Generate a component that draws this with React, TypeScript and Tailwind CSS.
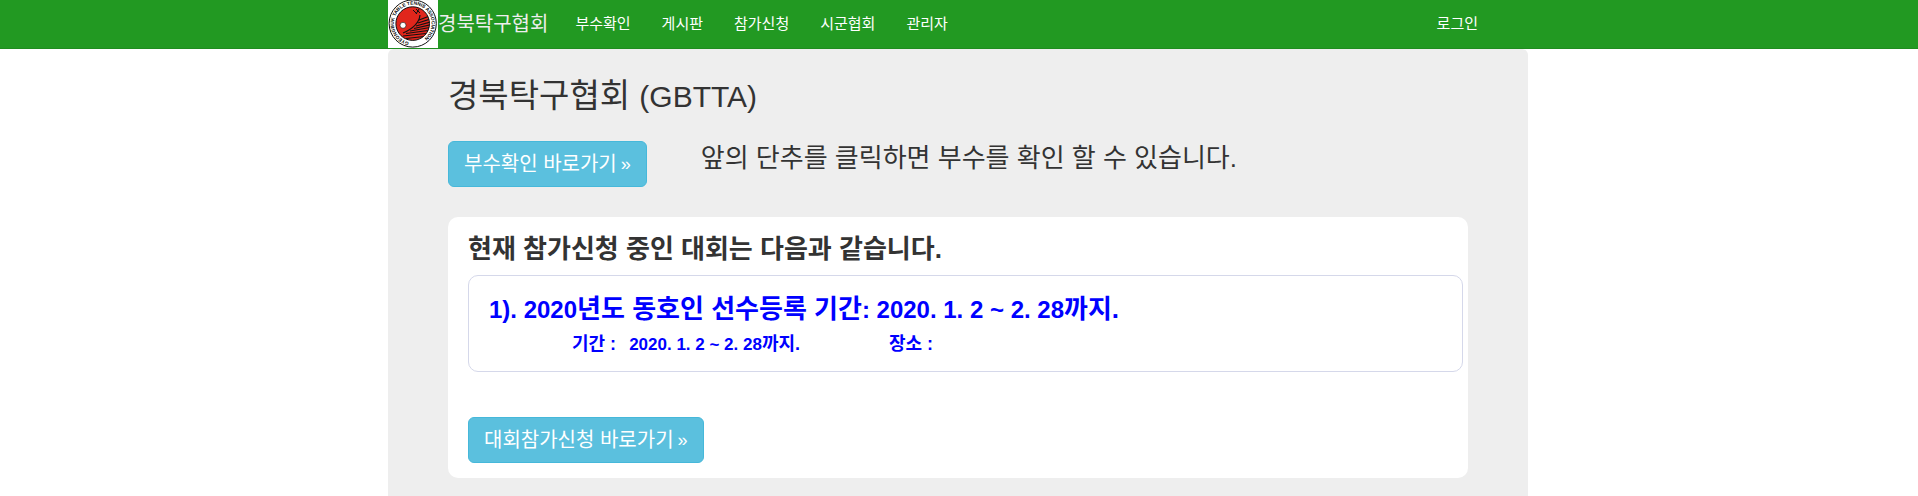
import type { ReactNode } from "react";

const navLinks = ["부수확인", "게시판", "참가신청", "시군협회", "관리자"];

function Logo() {
  return (
    <svg viewBox="0 0 50 48" className="h-12 w-[50px] shrink-0" role="img" aria-label="GBTTA">
      <defs>
        <path id="ring-text" d="M 21 42.100 A 18.900 18.900 0 1 1 28.500 42.100" />
        <clipPath id="ball">
          <circle cx="24.7" cy="23.6" r="16.8" />
        </clipPath>
      </defs>
      <rect width="50" height="48" fill="#fff" />
      <circle cx="24.7" cy="23.5" r="23.6" fill="#fff" stroke="#111" strokeWidth="1" />
      <circle cx="24.7" cy="23.6" r="16.8" fill="#e1261c" stroke="#111" strokeWidth="1" />
      <g clipPath="url(#ball)" fill="none" stroke="#111">
        <path d="M25 10 l4 4 M28 9 l4 4 M31 9 l-3 5" strokeWidth="1" />
        <path d="M32 15 Q31 26 15 33 M31 20 L44 15 M30 23 L44 18.500 M28 26 L44 21.500 M26 28.500 L44 24.500 M22 31 L42 27.500 M18 33.500 L40 30.500 M15 36 L38 33.500 M18 38.500 L36 36.500" strokeWidth="1.200" />
      </g>
      <circle cx="15" cy="25.300" r="3" fill="#fff" stroke="#111" strokeWidth="0.600" />
      <text fontSize="4.800" fontWeight="700" fill="#000" className="font-['Liberation_Sans',sans-serif]">
        <textPath href="#ring-text">GYEONGBUK TABLE TENNIS ASSOCIATION</textPath>
      </text>
    </svg>
  );
}

function ActionLink({ children }: { children: ReactNode }) {
  return (
    <a
      href="#"
      className="inline-flex h-[46px] items-center gap-1 rounded-md border border-[#46b8da] bg-[#5bc0de] px-[15px] text-[20px] text-white"
    >
      {children}
      <span className="text-lg">»</span>
    </a>
  );
}

export default function App() {
  return (
    <div className="bg-white font-['Liberation_Sans','Noto_Sans_CJK_KR',sans-serif] text-[#333]">
      <header className="border-b border-[#1f8c1f] bg-[#229922] pr-0.5">
        <nav className="mx-auto flex h-12 max-w-[1140px] items-center text-white">
          <Logo />
          <a href="#" className="text-[20px] leading-none text-[#eee]">
            경북탁구협회
          </a>
          <ul className="ml-3 flex flex-1 gap-px text-[15px]">
            {navLinks.map((label) => (
              <li key={label}>
                <a href="#" className="block px-[15px]">
                  {label}
                </a>
              </li>
            ))}
          </ul>
          <a href="#" className="mr-[35px] px-[15px] text-[15px]">
            로그인
          </a>
        </nav>
      </header>

      <div className="pr-0.5">
        <main className="mx-auto max-w-[1140px] rounded-t-md bg-[#eee] px-[60px] pt-[26px] pb-[18px]">
          <h1 className="text-[33px] leading-[42px]">
            경북탁구협회 <span className="text-[30px] leading-none">(GBTTA)</span>
          </h1>

          <div className="mt-6 flex items-start gap-[54px]">
            <ActionLink>부수확인 바로가기</ActionLink>
            <p className="text-[26px] leading-[34px]">앞의 단추를 클릭하면 부수를 확인 할 수 있습니다.</p>
          </div>

          <section className="mt-[30px] rounded-[10px] bg-white pt-4 pr-[5px] pb-[15px] pl-5">
            <h2 className="text-[26px] leading-8 font-bold">현재 참가신청 중인 대회는 다음과 같습니다.</h2>

            <article className="mt-[10px] rounded-[10px] border border-[#d5d8ea] px-5 pt-[15px] pb-[10px] font-bold text-[#0000ff]">
              <h3 className="text-[26px] leading-9">
                <span className="text-2xl leading-none">1). 2020</span>년도 동호인 선수등록 기간
                <span className="text-2xl leading-none">: 2020. 1. 2 ~ 2. 28</span>까지.
              </h3>
              <div className="flex pl-[83px] text-[18px] leading-[34px]">
                <p className="w-[317px]">
                  기간 : <span className="ml-2 text-[17px] leading-none">2020. 1. 2 ~ 2. 28</span>까지.
                </p>
                <p>장소 :</p>
              </div>
            </article>

            <div className="mt-[45px] flex">
              <ActionLink>대회참가신청 바로가기</ActionLink>
            </div>
          </section>
        </main>
      </div>
    </div>
  );
}
